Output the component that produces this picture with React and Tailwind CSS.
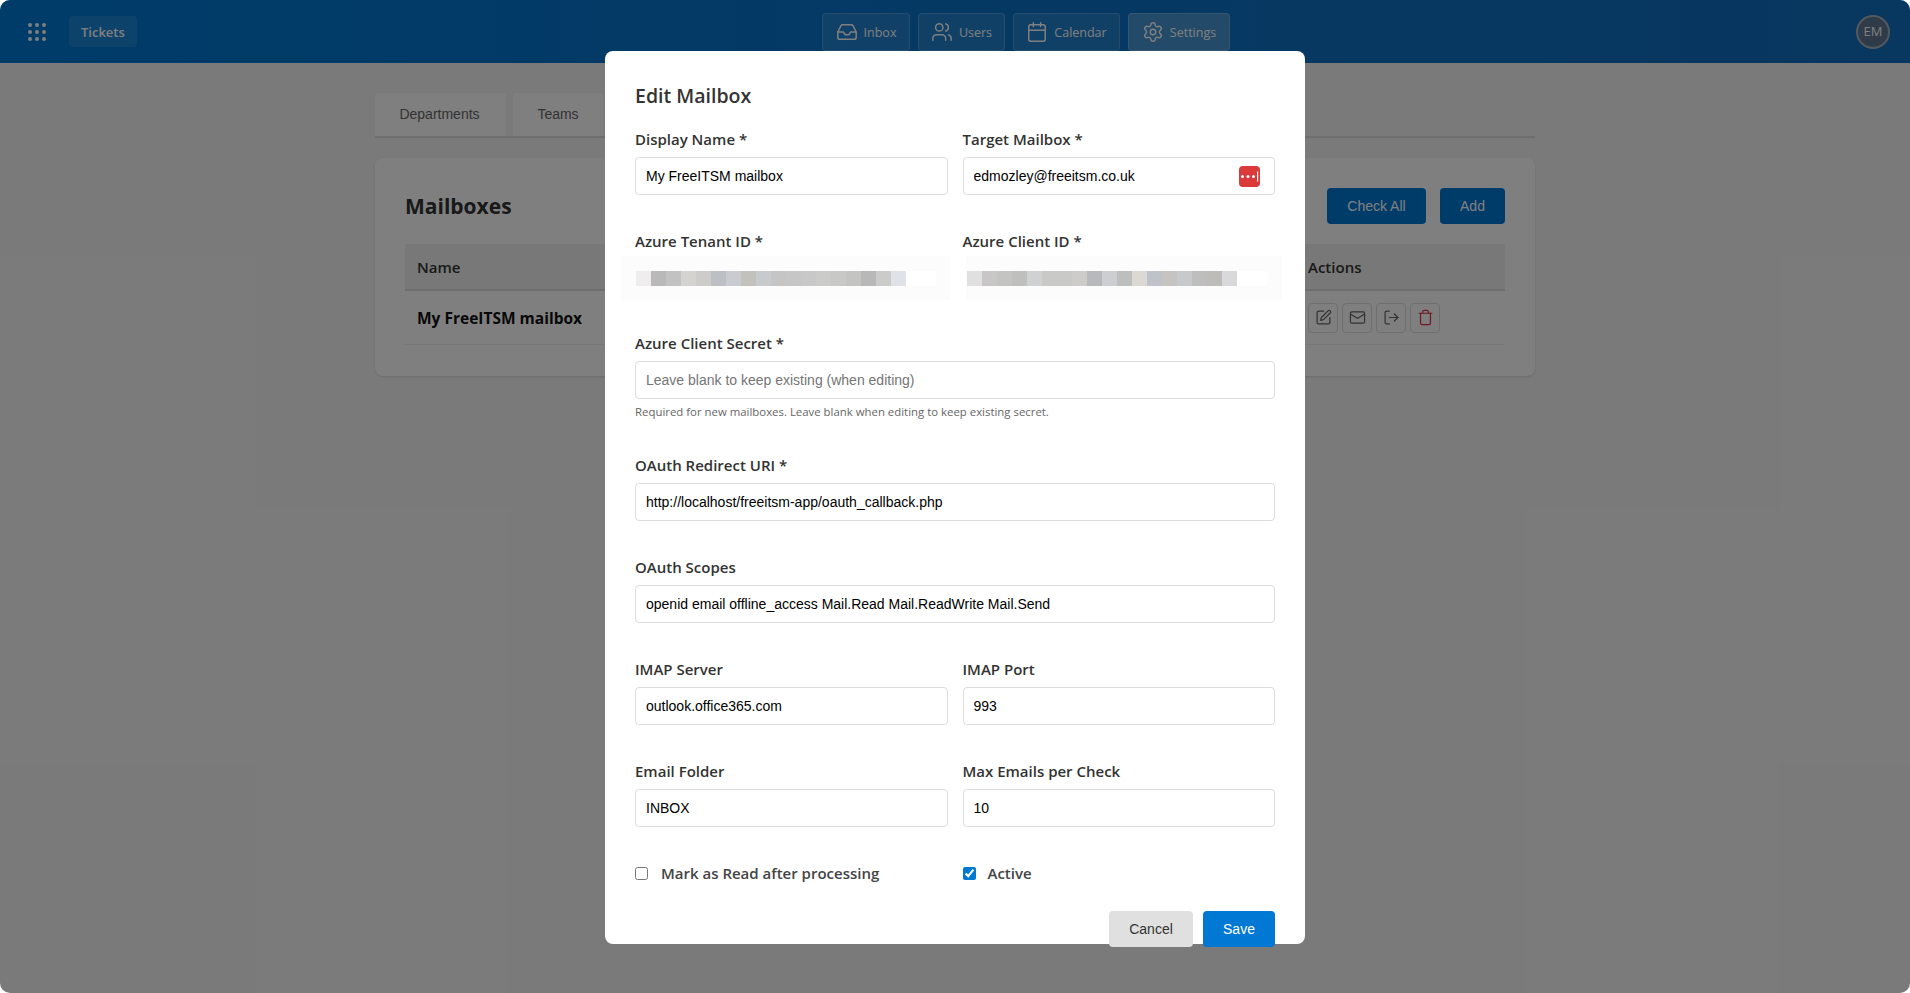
import { Inbox, Users, Calendar, Settings, SquarePen, Mail, LogOut, Trash } from 'lucide-react'

const uiFont = "font-['Open_Sans','Noto_Sans',sans-serif]"
const inputFont = "font-['Liberation_Sans',Arial,sans-serif]"

const navItems = [
  { label: 'Inbox', icon: Inbox, width: 'w-[88px]' },
  { label: 'Users', icon: Users, width: 'w-[87px]' },
  { label: 'Calendar', icon: Calendar, width: 'w-[107px]' },
  { label: 'Settings', icon: Settings, width: 'w-[102px]', active: true },
]

const tenantBlocks = [
  'bg-[#efedee]', 'bg-[#b9b9b9]', 'bg-[#c2c2c2]', 'bg-[#d4d3d0]', 'bg-[#cdccca]', 'bg-[#bcc0c4]',
  'bg-[#c9cbd1]', 'bg-[#c2c1be]', 'bg-[#c8cbcd]', 'bg-[#c5c5c5]', 'bg-[#c6c6c6]', 'bg-[#c8c8c8]',
  'bg-[#cbcbc9]', 'bg-[#c8c8c6]', 'bg-[#c4c5c3]', 'bg-[#b9b8b8]', 'bg-[#cbcbc9]', 'bg-[#dfe3e7]',
]

const clientBlocks = [
  'bg-[#e0e0e0]', 'bg-[#c8c6c6]', 'bg-[#c4c4c3]', 'bg-[#bfbfbe]', 'bg-[#d0d1d3]', 'bg-[#c9c9c7]',
  'bg-[#c9c9c7]', 'bg-[#cdccc8]', 'bg-[#b8b9bd]', 'bg-[#cdced1]', 'bg-[#bcbfbe]', 'bg-[#dcd9d5]',
  'bg-[#bfc3c9]', 'bg-[#c6c4c0]', 'bg-[#c8c9cc]', 'bg-[#bfbebe]', 'bg-[#bdbcb9]', 'bg-[#d9d9db]',
]

function GridIcon() {
  return (
    <svg width="18" height="18" viewBox="0 0 18 18" fill="currentColor">
      {[2, 9, 16].map(y =>
        [2, 9, 16].map(x => <circle key={`${x}-${y}`} cx={x} cy={y} r="2" />)
      )}
    </svg>
  )
}

function Label({ children }) {
  return <label className={`block h-[20px] mb-[7px] text-[15px] leading-[18px] font-[550] text-[#333] ${uiFont}`}>{children}</label>
}

function Field({ label, value, placeholder, children }) {
  return (
    <div>
      <Label>{label}</Label>
      <div className="relative">
        <input
          readOnly
          value={value ?? ''}
          placeholder={placeholder}
          className={`block w-full h-[38px] px-[10px] border border-[#ddd] rounded-[4px] text-[14px] text-black outline-none placeholder:text-[#757575] ${inputFont}`}
        />
        {children}
      </div>
    </div>
  )
}

function BlurredField({ label, blocks, className }) {
  return (
    <div>
      <Label>{label}</Label>
      <div className={`h-[44px] -mt-[3px] pt-[15px] bg-[#fcfcfc] ${className}`}>
        <div className="flex">
          {blocks.map((b, i) => <div key={i} className={`w-[15px] h-[15px] ${b}`} />)}
          <div className="w-[30px] h-[15px] bg-white" />
        </div>
      </div>
    </div>
  )
}

function ActionButton({ icon: Icon, className = 'text-[#666]' }) {
  return (
    <button className={`w-[30px] h-[30px] flex items-center justify-center border border-[#ddd] rounded-[4px] ${className}`}>
      <Icon size={17} strokeWidth={1.75} />
    </button>
  )
}

export default function App() {
  return (
    <div className="bg-white">
      <div className="relative h-[993px] w-[1910px] overflow-hidden rounded-[10px] bg-[#f5f5f5]">
        <header className="h-[63px] flex items-center justify-between pl-[28px] pr-[20px] bg-gradient-to-r from-[#0078d4] to-[#106ebe] text-white">
          <div className="flex items-center gap-[23px]">
            <GridIcon />
            <span className={`h-[31px] px-[12px] pt-[3px] flex items-center rounded-[4px] bg-white/10 text-[13px] font-semibold ${uiFont}`}>Tickets</span>
          </div>
          <nav className="absolute left-[822px] top-[13px] flex gap-[8px]">
            {navItems.map(({ label, icon: Icon, width, active }) => (
              <span
                key={label}
                className={`h-[38px] flex items-center justify-center gap-[6px] rounded-[4px] border border-white/20 text-[12.5px] ${uiFont} ${width} ${active ? 'bg-white/25' : 'bg-white/10'}`}
              >
                <Icon size={22} strokeWidth={1.6} />
                <span className="pt-[2px]">{label}</span>
              </span>
            ))}
          </nav>
          <div className={`w-[34px] h-[34px] pt-[1px] rounded-full bg-[#5f7690] border-2 border-[#a4b2be] flex items-center justify-center text-[13px] font-medium ${uiFont}`}>EM</div>
        </header>

        <main className="w-[1160px] mx-auto pt-[30px]">
          <div className={`flex h-[45px] border-b-2 border-[#ddd] gap-[7px] text-[14px] text-[#666] ${inputFont}`}>
            <span className="w-[131px] h-[43px] pr-[2px] flex items-center justify-center rounded-t-[4px] bg-white">Departments</span>
            <span className="w-[90px] h-[43px] flex items-center justify-center rounded-t-[4px] bg-white">Teams</span>
          </div>
          <div className="mt-[20px] h-[218px] rounded-[8px] bg-white px-[30px] pt-[30px] shadow-sm">
            <div className="flex items-center justify-between h-[36px]">
              <h2 className={`pt-[2px] text-[21px] font-bold text-[#333] ${uiFont}`}>Mailboxes</h2>
              <div className={`flex gap-[14px] text-[14px] text-white ${inputFont}`}>
                <button className="w-[99px] h-[36px] rounded-[4px] bg-[#0078d4]">Check All</button>
                <button className="w-[65px] h-[36px] rounded-[4px] bg-[#0078d4]">Add</button>
              </div>
            </div>
            <div className={`mt-[20px] h-[47px] grid grid-cols-[891px_1fr] items-center bg-[#f0f0f0] border-b-2 border-[#ddd] text-[15px] font-[550] text-[#333] ${uiFont}`}>
              <span className="pl-[12px] pt-[1px]">Name</span>
              <span className="pl-[12px] pt-[1px]">Actions</span>
            </div>
            <div className={`h-[54px] grid grid-cols-[891px_1fr] items-center border-b border-[#eee] ${uiFont}`}>
              <span className="pl-[12px] pt-[3px] text-[15.5px] font-bold text-[#111]">My FreeITSM mailbox</span>
              <div className="flex gap-[4px] pl-[12px]">
                <ActionButton icon={SquarePen} />
                <ActionButton icon={Mail} />
                <ActionButton icon={LogOut} />
                <ActionButton icon={Trash} className="text-[#dc3545]" />
              </div>
            </div>
          </div>
        </main>

        {/* dimmed backdrop, the dialog sits on top of it */}
        <div className="absolute inset-0 bg-black/50" />

        <div className="absolute left-[605px] top-[51px] w-[700px] h-[893px] rounded-[8px] bg-white px-[30px] pt-[30px]">
          <h2 className={`h-[30px] text-[19.5px] leading-[30px] font-[550] text-[#333] ${uiFont}`}>Edit Mailbox</h2>
          <div className="mt-[19px] grid grid-cols-2 gap-x-[15px] gap-y-[37px]">
            <Field label="Display Name *" value="My FreeITSM mailbox" />
            <Field label="Target Mailbox *" value="edmozley@freeitsm.co.uk">
              <span className="absolute right-[15px] top-[9px] w-[21px] h-[21px] rounded-[4px] bg-[#dc3a3a] flex items-center justify-center">
                <svg width="21" height="21" viewBox="0 0 21 21" fill="white">
                  <circle cx="3.5" cy="10.5" r="1.5" />
                  <circle cx="9" cy="10.5" r="1.5" />
                  <circle cx="14.5" cy="10.5" r="1.5" />
                  <rect x="18" y="5.5" width="1.2" height="10" />
                </svg>
              </span>
            </Field>
            <BlurredField label="Azure Tenant ID *" blocks={tenantBlocks} className="ml-[-14px] w-[329px] pl-[15px]" />
            <BlurredField label="Azure Client ID *" blocks={clientBlocks} className="ml-[3px] w-[316px] pl-[1px]" />
          </div>
          <div className="mt-[34px]">
            <Field label="Azure Client Secret *" placeholder="Leave blank to keep existing (when editing)" />
            <p className={`mt-[5px] h-[16px] text-[11.4px] leading-[16px] text-[#666] ${uiFont}`}>Required for new mailboxes. Leave blank when editing to keep existing secret.</p>
          </div>
          <div className="mt-[36px] flex flex-col gap-y-[37px]">
            <Field label="OAuth Redirect URI *" value="http://localhost/freeitsm-app/oauth_callback.php" />
            <Field label="OAuth Scopes" value="openid email offline_access Mail.Read Mail.ReadWrite Mail.Send" />
            <div className="grid grid-cols-2 gap-x-[15px] gap-y-[37px]">
              <Field label="IMAP Server" value="outlook.office365.com" />
              <Field label="IMAP Port" value="993" />
              <Field label="Email Folder" value="INBOX" />
              <Field label="Max Emails per Check" value="10" />
            </div>
          </div>
          <div className={`mt-[36px] grid grid-cols-2 gap-x-[15px] text-[15px] font-[550] text-[#444] ${uiFont}`}>
            <label className="h-[20px] flex items-center gap-[13px]">
              <input type="checkbox" readOnly className="w-[13px] h-[13px] accent-[#0078d4]" />
              Mark as Read after processing
            </label>
            <label className="h-[20px] flex items-center gap-[12px]">
              <input type="checkbox" readOnly checked className="w-[13px] h-[13px] accent-[#0078d4]" />
              Active
            </label>
          </div>
          <div className={`mt-[28px] flex justify-end gap-[10px] text-[14px] ${inputFont}`}>
            <button className="w-[84px] h-[36px] rounded-[4px] bg-[#e0e0e0] text-[#333]">Cancel</button>
            <button className="w-[72px] h-[36px] rounded-[4px] bg-[#0078d4] text-white">Save</button>
          </div>
        </div>
      </div>
    </div>
  )
}
